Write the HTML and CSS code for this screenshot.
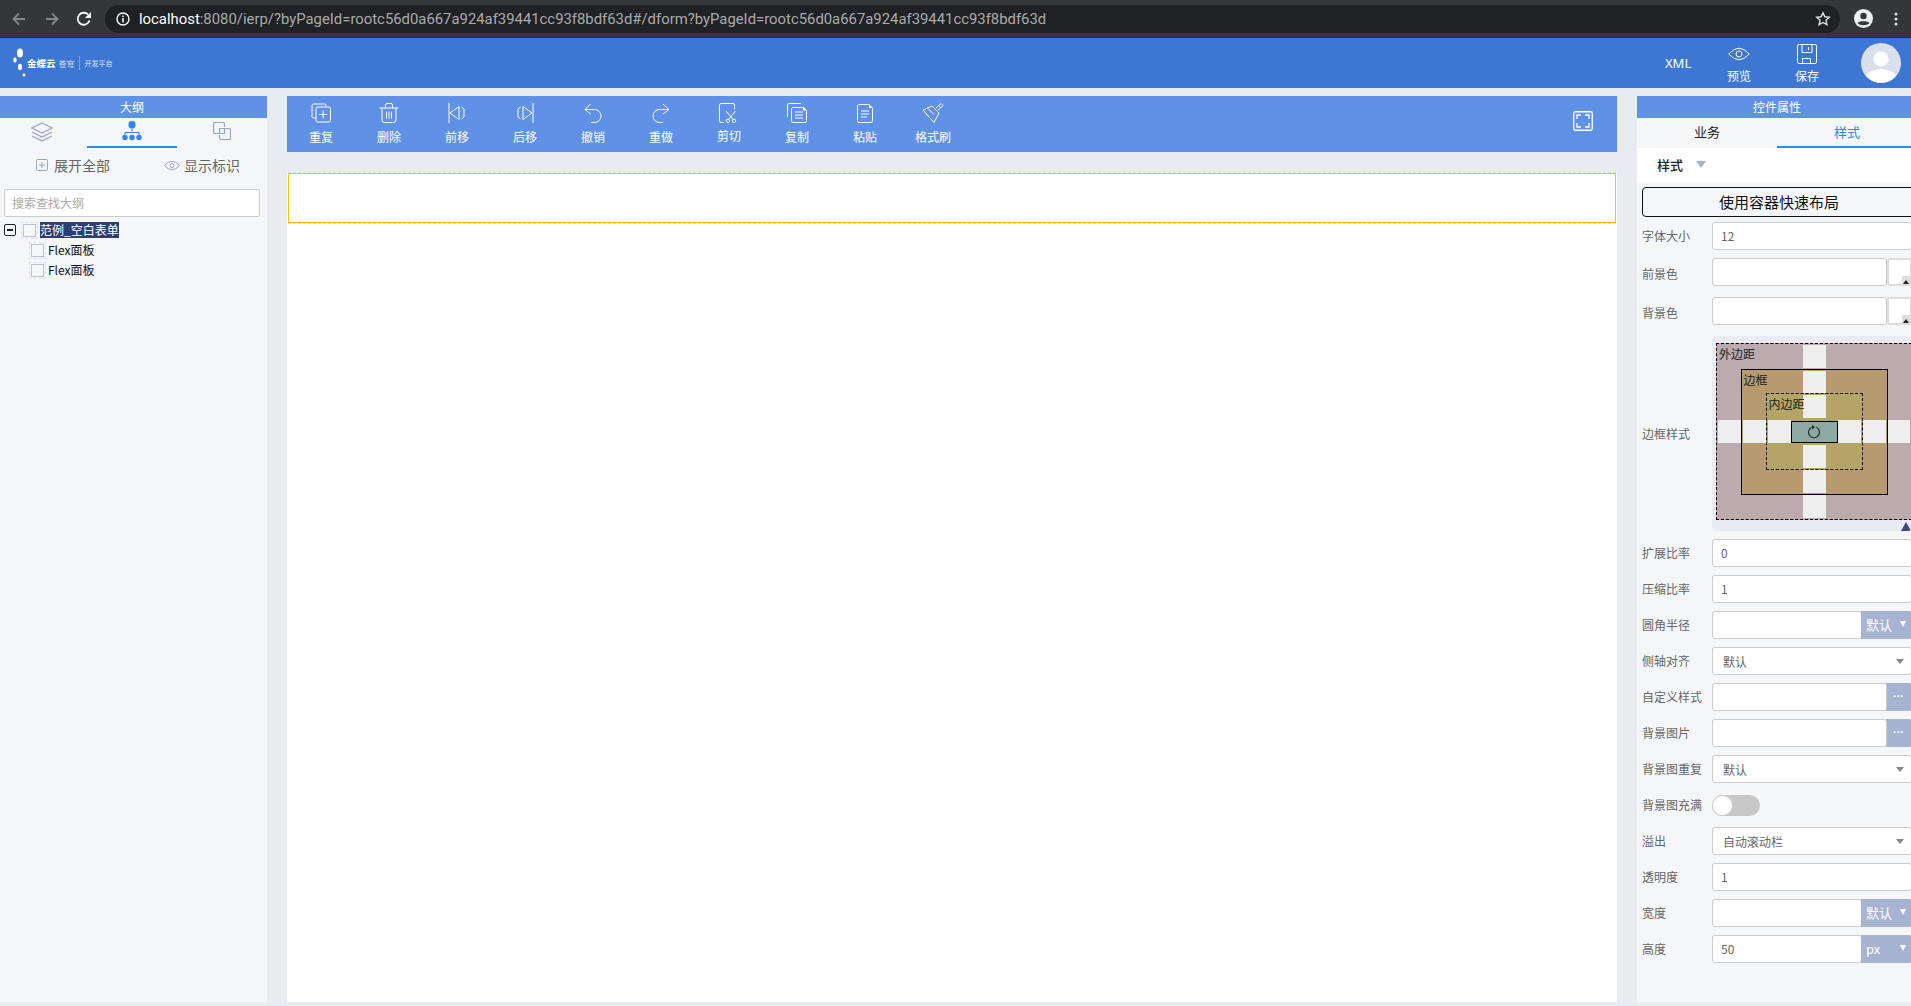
FILE: index.html
```html
<!DOCTYPE html>
<html lang="zh">
<head>
<meta charset="utf-8">
<title>表单设计器</title>
<link rel="stylesheet" href="styles.css">
</head>
<body>
<div class="app">
  <div class="browser">
    <svg class="nav-icon nav-back" width="14" height="14" viewBox="0 0 14 14"><path d="M13 7H2M7 1.500L1.500 7 7 12.500" fill="none" stroke="#85868a" stroke-width="1.800"/></svg>
    <svg class="nav-icon nav-forward" width="14" height="14" viewBox="0 0 14 14"><path d="M1 7h11M7 1.500L12.500 7 7 12.500" fill="none" stroke="#85868a" stroke-width="1.800"/></svg>
    <svg class="nav-icon nav-reload" width="16" height="16" viewBox="0 0 16 16"><path d="M13.500 9.500A6 6 0 1 1 12 3.500" fill="none" stroke="#fff" stroke-width="1.800"/><path d="M15 1v6H9z" fill="#fff"/></svg>
    <div class="url">
      <svg width="14" height="14" viewBox="0 0 14 14"><circle cx="7" cy="7" r="6" fill="none" stroke="#fff" stroke-width="1.400"/><path d="M7 6v4.500M7 3.500v1.500" stroke="#fff" stroke-width="1.500"/></svg>
      <span class="url-text"><span class="url-host">localhost</span>:8080/ierp/?byPageId=rootc56d0a667a924af39441cc93f8bdf63d#/dform?byPageId=rootc56d0a667a924af39441cc93f8bdf63d</span>
      <svg class="star" width="16" height="16" viewBox="0 0 16 16"><path d="M8 1.800l1.900 4 4.400.5-3.300 3 .9 4.400L8 11.500l-3.900 2.200.9-4.400-3.300-3 4.400-.5z" fill="none" stroke="#dfe1e4" stroke-width="1.400"/></svg>
    </div>
    <svg class="profile" width="19" height="19" viewBox="0 0 19 19"><circle cx="9.500" cy="9.500" r="9.500" fill="#eceef0"/><circle cx="9.500" cy="7" r="3.200" fill="#35363a"/><path d="M3.500 14c1.500-2.500 10.500-2.500 12 0-2.500 3-9.500 3-12 0z" fill="#35363a"/></svg>
    <svg class="kebab" width="4" height="14" viewBox="0 0 4 14"><circle cx="2" cy="2" r="1.500" fill="#dfe1e4"/><circle cx="2" cy="7" r="1.500" fill="#dfe1e4"/><circle cx="2" cy="12" r="1.500" fill="#dfe1e4"/></svg>
  </div>

  <header class="topbar">
    <div class="logo">
      <svg width="14" height="30" viewBox="0 0 14 30"><ellipse cx="7" cy="5" rx="3" ry="4.500" fill="#fff"/><ellipse cx="2" cy="12" rx="1.700" ry="2.800" fill="#fff"/><ellipse cx="7" cy="19" rx="2" ry="3.200" fill="#fff"/><circle cx="11" cy="27" r="1.500" fill="#fff"/></svg>
      <span class="logo-main">金蝶云</span>
      <span class="logo-sub">苍穹</span>
      <span class="logo-div"></span>
      <span class="logo-plat">开发平台</span>
    </div>
    <div class="top-actions">
      <div class="top-xml">XML</div>
      <div class="top-btn">
        <svg width="22" height="20" viewBox="0 0 22 20"><path d="M.7 10Q11-1.500 21.300 10 11 21.500.7 10z" fill="none" stroke="#fff"/><circle cx="11" cy="10" r="3" fill="none" stroke="#fff"/></svg>
        <span>预览</span>
      </div>
      <div class="top-btn">
        <svg width="20" height="20" viewBox="0 0 20 20"><path d="M2 .5h16a1.500 1.500 0 0 1 1.500 1.500v16a1.500 1.500 0 0 1-1.500 1.500H2A1.500 1.500 0 0 1 .5 18V2A1.500 1.500 0 0 1 2 .5zM5 .5v8h10v-8M11.500 3v3M5.500 19.500v-5h8v5" fill="none" stroke="#fff"/></svg>
        <span>保存</span>
      </div>
      <svg class="avatar" width="40" height="40" viewBox="0 0 40 40"><circle cx="20" cy="20" r="20" fill="#d9e0ec"/><circle cx="20" cy="16" r="7.500" fill="#fff"/><path d="M5 33c3-9 27-9 30 0a20 20 0 0 1-30 0z" fill="#fff"/></svg>
    </div>
  </header>

  <main class="workspace">
    <aside class="outline">
      <div class="panel-title outline-title">大纲</div>
      <div class="outline-tabs">
        <div class="outline-tab">
          <svg width="22" height="20" viewBox="0 0 22 20"><path d="M11 1l10 5-10 5L1 6zM1 10l10 5 10-5M1 14l10 5 10-5" fill="none" stroke="#97a5c8" stroke-width="1.300"/></svg>
        </div>
        <div class="outline-tab active">
          <svg width="20" height="20" viewBox="0 0 20 20"><rect x="6.500" y="0" width="7" height="7.500" rx="3" fill="#2f87f2"/><path d="M10 7.500v3M3 14v-2.500h14V14" fill="none" stroke="#2f87f2"/><circle cx="3" cy="16.500" r="2.700" fill="#2f87f2"/><circle cx="10" cy="16.500" r="2.700" fill="#2f87f2"/><circle cx="17" cy="16.500" r="2.700" fill="#2f87f2"/></svg>
        </div>
        <div class="outline-tab">
          <svg width="18" height="18" viewBox="0 0 18 18"><path d="M6 11.500H2a1.500 1.500 0 0 1-1.500-1.500V2A1.500 1.500 0 0 1 2 .5h8A1.500 1.500 0 0 1 11.500 2v3M12 6.500h4A1.500 1.500 0 0 1 17.500 8v8a1.500 1.500 0 0 1-1.500 1.500H8A1.500 1.500 0 0 1 6.500 16v-3M6.500 6.500h5v5h-5z" fill="none" stroke="#97a5c8" stroke-width="1.200"/></svg>
        </div>
      </div>
      <div class="outline-actions">
        <div class="outline-action expand">
          <svg width="12" height="12" viewBox="0 0 12 12"><rect x=".5" y=".5" width="11" height="11" rx="1" fill="none" stroke="#97a5c8"/><path d="M3 6h6M6 3v6" stroke="#97a5c8"/></svg>
          <span>展开全部</span>
        </div>
        <div class="outline-action">
          <svg width="16" height="11" viewBox="0 0 16 11"><path d="M.5 5.500Q8-3 15.500 5.500 8 14 .5 5.500z" fill="none" stroke="#97a5c8"/><circle cx="8" cy="5.500" r="2" fill="none" stroke="#97a5c8"/></svg>
          <span>显示标识</span>
        </div>
      </div>
      <div class="outline-search"><span>搜索查找大纲</span></div>
      <div class="tree">
        <div class="tree-row">
          <span class="tree-toggle"></span>
          <span class="tree-check"></span>
          <span class="tree-label selected">范例_空白表单</span>
        </div>
        <div class="tree-row child">
          <span class="tree-check"></span>
          <span class="tree-label">Flex面板</span>
        </div>
        <div class="tree-row child">
          <span class="tree-check"></span>
          <span class="tree-label">Flex面板</span>
        </div>
      </div>
    </aside>

    <section class="center">
      <div class="toolbar">
        <div class="tool">
          <svg width="20" height="20" viewBox="0 0 20 20"><path d="M15 3.500V2.500A1.500 1.500 0 0 0 13.500 1h-11A1.500 1.500 0 0 0 1 2.500v11A1.500 1.500 0 0 0 2.500 15H5" fill="none" stroke="#fff"/><rect x="5" y="4" width="14.500" height="15" rx="1.500" fill="none" stroke="#fff"/><path d="M12.200 7.500v8M8.200 11.500h8" stroke="#fff"/></svg>
          <span>重复</span>
        </div>
        <div class="tool">
          <svg width="20" height="20" viewBox="0 0 20 20"><path d="M.5 5h19M6.500 5V2A1.500 1.500 0 0 1 8 .5h4A1.500 1.500 0 0 1 13.500 2v3M3 5v12a2.500 2.500 0 0 0 2.500 2.500h9A2.500 2.500 0 0 0 17 17V5M7.500 8.500v7M10 8.500v7M12.500 8.500v7" fill="none" stroke="#fff"/></svg>
          <span>删除</span>
        </div>
        <div class="tool">
          <svg width="20" height="20" viewBox="0 0 20 20"><path d="M2 0v20M12 3.500L3 10l9 6.500zM14.500 4l2.500 2v8l-2.500 2" fill="none" stroke="#fff"/></svg>
          <span>前移</span>
        </div>
        <div class="tool">
          <svg width="20" height="20" viewBox="0 0 20 20"><path d="M18 0v20M8 3.500L17 10 8 16.500zM5.500 4L3 6v8l2.500 2" fill="none" stroke="#fff"/></svg>
          <span>后移</span>
        </div>
        <div class="tool">
          <svg width="20" height="20" viewBox="0 0 20 20"><path d="M7.500 1L2 6.500 7.500 11M2 6.500h9.500a6.500 6.500 0 0 1 0 13H8" fill="none" stroke="#fff"/></svg>
          <span>撤销</span>
        </div>
        <div class="tool">
          <svg width="20" height="20" viewBox="0 0 20 20"><path d="M12 1l6 5.500L12 11M18 6.500H8.500a6.500 6.500 0 0 0 0 13H12" fill="none" stroke="#fff"/></svg>
          <span>重做</span>
        </div>
        <div class="tool">
          <svg width="20" height="20" viewBox="0 0 20 20"><path d="M5 19.500H2A1.500 1.500 0 0 1 .5 18V2A1.500 1.500 0 0 1 2 .5h12A1.500 1.500 0 0 1 15.500 2v4M7 8l6.500 8M16.500 8L10 16" fill="none" stroke="#fff"/><circle cx="9" cy="17.800" r="1.700" fill="none" stroke="#fff"/><circle cx="15" cy="17.800" r="1.700" fill="none" stroke="#fff"/></svg>
          <span class="tool-up">剪切</span>
        </div>
        <div class="tool">
          <svg width="20" height="20" viewBox="0 0 20 20"><path d="M14 .5H2A1.500 1.500 0 0 0 .5 2v12" fill="none" stroke="#fff"/><path d="M5 4.500h11.500l3 3V18a1.500 1.500 0 0 1-1.500 1.500H6A1.500 1.500 0 0 1 4.500 18V5M8 9h8M8 12h8M8 15h8" fill="none" stroke="#fff"/><path d="M16 3.500l4 4h-4z" fill="#fff"/></svg>
          <span>复制</span>
        </div>
        <div class="tool">
          <svg width="20" height="20" viewBox="0 0 20 20"><path d="M3.500 1.500h10l4 4V18a1.500 1.500 0 0 1-1.500 1.500H4A1.500 1.500 0 0 1 2.500 18V3a1.500 1.500 0 0 1 1-1.500zM6 8h8M6 11h8M6 14h6" fill="none" stroke="#fff"/><path d="M14 1l4 4h-4z" fill="#fff"/></svg>
          <span>粘贴</span>
        </div>
        <div class="tool">
          <svg width="22" height="20" viewBox="0 0 22 20"><path d="M1 7l9-4 7 7-5 9.500zM6 5.500l6 6M4 11l3 3M14 5l5-4.500 2 2-5 5M17 3l1.500 1.500" fill="none" stroke="#fff"/></svg>
          <span>格式刷</span>
        </div>
        <svg class="fullscreen" width="20" height="20" viewBox="0 0 20 20"><rect x=".75" y=".75" width="18.500" height="18.500" rx="1.500" fill="none" stroke="#fff" stroke-width="1.300"/><path d="M4 8V4h4M12 4h4v4M16 12v4h-4M8 16H4v-4" fill="none" stroke="#fff" stroke-width="1.300"/></svg>
      </div>
      <div class="canvas">
        <div class="zone-wrap"><div class="zone"></div></div>
      </div>
    </section>

    <aside class="props">
      <div class="props-inner">
        <div class="panel-title">控件属性</div>
        <div class="props-tabs">
          <div class="props-tab">业务</div>
          <div class="props-tab active">样式</div>
        </div>
        <div class="props-section">
          <span>样式</span>
          <i class="section-caret"></i>
        </div>
        <div class="props-body">
          <div class="quick-btn">使用容器快速布局</div>
          <div class="form">
            <div class="row"><label>字体大小</label><div class="field">12</div></div>
            <div class="row tall"><label>前景色</label><div class="field"></div><div class="swatch"></div></div>
            <div class="row tall"><label>背景色</label><div class="field"></div><div class="swatch"></div></div>
            <div class="row box-row">
              <label>边框样式</label>
              <div class="box-wrap">
                <div class="bm bm-margin">
                  <span class="bm-name">外边距</span>
                  <i class="strip s-top"></i><i class="strip s-bottom"></i><i class="strip s-left"></i><i class="strip s-right"></i>
                  <div class="bm bm-border">
                    <span class="bm-name">边框</span>
                    <i class="strip s-top"></i><i class="strip s-bottom"></i><i class="strip s-left"></i><i class="strip s-right"></i>
                    <div class="bm bm-padding">
                      <span class="bm-name">内边距</span>
                      <i class="strip s-top"></i><i class="strip s-bottom"></i><i class="strip s-left"></i><i class="strip s-right"></i>
                      <div class="bm-content">
                        <svg width="14" height="14" viewBox="0 0 14 14"><path d="M9.500 2.300A5.500 5.500 0 1 1 4.500 2.300" fill="none" stroke="#1f2d33" stroke-width="1.100"/><path d="M5 0v4.500L8 2z" fill="#1f2d33"/></svg>
                      </div>
                    </div>
                  </div>
                </div>
                <i class="box-corner"></i>
              </div>
            </div>
            <div class="row"><label>扩展比率</label><div class="field">0</div></div>
            <div class="row"><label>压缩比率</label><div class="field">1</div></div>
            <div class="row"><label>圆角半径</label><div class="field"></div><div class="unit">默认<i></i></div></div>
            <div class="row"><label>侧轴对齐</label><div class="field select">默认<i></i></div></div>
            <div class="row"><label>自定义样式</label><div class="field"></div><div class="dots">···</div></div>
            <div class="row"><label>背景图片</label><div class="field"></div><div class="dots">···</div></div>
            <div class="row"><label>背景图重复</label><div class="field select">默认<i></i></div></div>
            <div class="row"><label>背景图充满</label><div class="switch"><i></i></div></div>
            <div class="row"><label>溢出</label><div class="field select">自动滚动栏<i></i></div></div>
            <div class="row"><label>透明度</label><div class="field">1</div></div>
            <div class="row"><label>宽度</label><div class="field"></div><div class="unit">默认<i></i></div></div>
            <div class="row"><label>高度</label><div class="field">50</div><div class="unit">px<i></i></div></div>
          </div>
        </div>
      </div>
    </aside>
  </main>
</div>
</body>
</html>
```

FILE: styles.css
```css
* { box-sizing: border-box; }
html, body { margin: 0; padding: 0; height: 100%; overflow: hidden; }
body {
  font-family: "Noto Sans CJK SC", "Noto Sans", sans-serif;
  font-size: 12px;
  color: #666;
  background: #e8ebf0;
}
.app { display: flex; flex-direction: column; height: 1006px; }

/* browser chrome */
.browser {
  height: 38px;
  flex: none;
  display: flex;
  align-items: center;
  background: #35363a;
  border-bottom: 1px solid #29292c;
  padding-left: 12px;
}
.nav-icon { flex: none; }
.nav-forward { margin-left: 19px; }
.nav-reload { margin-left: 17px; }
.url {
  margin-left: 13px;
  width: 1735px;
  flex: none;
  height: 28px;
  border-radius: 14px;
  background: #202124;
  display: flex;
  align-items: center;
  padding-left: 11px;
  padding-right: 9px;
  font-family: "Roboto", sans-serif;
  font-size: 14.870px;
  color: #a9abae;
}
.url-text { margin-left: 9px; white-space: nowrap; }
.url-host { color: #fff; }
.star { margin-left: auto; }
.profile { margin-left: 14px; flex: none; }
.kebab { margin-left: 21px; flex: none; }

/* header */
.topbar {
  height: 50px;
  flex: none;
  background: #3e77d3;
  display: flex;
  align-items: center;
  justify-content: space-between;
  color: #fff;
}
.logo { display: flex; align-items: center; padding-left: 13px; }
.logo-main { font-size: 9.500px; font-weight: 700; white-space: nowrap; }
.logo-sub { font-size: 8px; margin-left: 3px; color: #dce6f7; white-space: nowrap; }
.logo-div { width: 1px; height: 14px; background: #7ea3e3; margin: 0 5px 0 4px; }
.logo-plat { font-size: 7px; color: #dce6f7; white-space: nowrap; }
.top-actions { display: flex; align-items: center; }
.top-xml { width: 26px; font-size: 13px; font-family: "Noto Sans", sans-serif; margin-right: 14px; white-space: nowrap; }
.top-btn {
  width: 68px;
  height: 50px;
  display: flex;
  flex-direction: column;
  align-items: center;
  padding-top: 6px;
  line-height: 18px;
}
.top-btn span { margin-top: 3px; }
.avatar { margin-left: 20px; margin-right: 10px; }

/* layout */
.workspace {
  flex: 1;
  min-height: 0;
  display: flex;
  padding: 8px 0 4px;
  gap: 20px;
}
.panel-title {
  height: 22px;
  line-height: 22px;
  text-align: center;
  background: #5f92e6;
  color: #fff;
}
.outline-title { padding-right: 3px; }

/* left */
.outline { width: 267px; flex: none; background: #f4f6f8; overflow: hidden; }
.outline-tabs { display: flex; width: 270px; margin-left: -3px; height: 30px; }
.outline-tab {
  width: 90px;
  flex: none;
  display: flex;
  justify-content: center;
  padding-top: 4px;
  border-bottom: 2px solid transparent;
}
.outline-tab.active { padding-top: 3px; border-bottom-color: #2f87f2; }
.outline-actions {
  display: flex;
  align-items: center;
  height: 36px;
  margin-top: -1px;
  font-size: 14px;
  color: #666;
}
.outline-action { display: flex; align-items: center; gap: 4px; }
.outline-action.expand { margin-left: 36px; gap: 6px; margin-right: 54px; }
.outline-search {
  margin: 6px 0 0 4px;
  width: 256px;
  height: 28px;
  background: #fff;
  border: 1px solid #ccc;
  border-radius: 2px;
  padding-left: 7px;
  line-height: 26px;
  color: #aaa;
}
.tree { padding-top: 3px; color: #111; }
.tree-row { display: flex; align-items: center; height: 20px; padding-left: 4px; }
.tree-row.child { padding-left: 31px; }
.tree-toggle {
  width: 12px;
  height: 12px;
  border: 1px solid #222;
  border-radius: 2px;
  margin-right: 7px;
  position: relative;
}
.tree-toggle::after {
  content: "";
  position: absolute;
  left: 2px;
  right: 2px;
  top: 4px;
  height: 2px;
  background: #222;
}
.tree-check {
  width: 13px;
  height: 13px;
  border: 1px solid #b8c2d8;
  margin-right: 4px;
  outline: 1px dashed #e0e3ea;
  outline-offset: 1px;
}
.tree-label { line-height: 16px; }
.tree-label.selected { background: #2d3f70; color: #fff; }

/* center */
.center { width: 1330px; flex: none; display: flex; flex-direction: column; }
.toolbar {
  height: 56px;
  flex: none;
  display: flex;
  align-items: flex-start;
  background: #5f92e6;
  color: #fff;
}
.tool {
  width: 68px;
  display: flex;
  flex-direction: column;
  align-items: center;
  padding-top: 7px;
  line-height: 18px;
}
.tool span { margin-top: 5px; }
.tool span.tool-up { margin-top: 4px; }
.fullscreen { margin: 15px 24px 0 auto; }
.canvas { flex: 1; margin-top: 20px; background: #fff; padding: 0 1px; }
.zone-wrap { border-top: 1px dashed #ddd; border-bottom: 1px dashed #ddd; }
.zone {
  height: 50px;
  background: #fff;
  border: 1px solid #f5c211;
}

/* right */
.props { width: 274px; flex: none; background: #f4f6f8; overflow: hidden; }
.props-inner { width: 280px; }
.props-tabs { display: flex; height: 30px; font-size: 13px; color: #222; }
.props-tab { width: 140px; flex: none; text-align: center; line-height: 28px; border-bottom: 2px solid transparent; }
.props-tab.active { color: #2f87f2; border-bottom-color: #2f87f2; }
.props-section {
  height: 34px;
  background: #fff;
  display: flex;
  align-items: center;
  padding: 0 0 2px 20px;
  font-size: 13px;
  font-weight: 500;
  color: #222;
}
.section-caret {
  margin: 0 0 0 13px;
  width: 0;
  height: 0;
  border-left: 5px solid transparent;
  border-right: 5px solid transparent;
  border-top: 7px solid #a5b2d0;
}
.props-body { padding-left: 5px; padding-top: 5px; }
.quick-btn {
  width: 274px;
  height: 30px;
  border: 1px solid #111;
  border-radius: 4px;
  text-align: center;
  line-height: 28px;
  font-size: 15px;
  color: #111;
}
.form { display: flex; flex-direction: column; gap: 8px; margin-top: 5px; width: 270px; }
.row { display: flex; align-items: flex-start; min-height: 28px; }
.row.tall { height: 31px; }
.row label { width: 70px; flex: none; line-height: 28px; white-space: nowrap; }
.row.tall label { height: 31px; line-height: 32px; }
.field {
  flex: 1;
  min-width: 0;
  height: 28px;
  background: #fff;
  border: 1px solid #ccc;
  border-radius: 3px;
  padding-left: 8px;
  line-height: 26px;
  color: #666;
  position: relative;
}
.select { padding-left: 10px; line-height: 28px; }
.select i {
  position: absolute;
  right: 7px;
  top: 11px;
  border-left: 4px solid transparent;
  border-right: 4px solid transparent;
  border-top: 5px solid #888;
}
.swatch {
  width: 25px;
  height: 28px;
  flex: none;
  background: #fff;
  border: 2px solid #ddd;
  border-radius: 3px;
  position: relative;
}
.swatch::after {
  content: "";
  position: absolute;
  right: 0;
  bottom: -2px;
  width: 8px;
  height: 10px;
  background: #ddd;
}
.swatch::before {
  content: "";
  position: absolute;
  right: 1px;
  bottom: 0;
  border-left: 3px solid transparent;
  border-right: 3px solid transparent;
  border-bottom: 4px solid #222;
  z-index: 1;
}
.unit {
  width: 51px;
  height: 28px;
  flex: none;
  margin-left: -1px;
  background: #a7b4d1;
  border-radius: 0 3px 3px 0;
  color: #fff;
  line-height: 28px;
  padding-left: 5px;
  font-size: 13px;
  position: relative;
}
.unit i {
  position: absolute;
  right: 6px;
  top: 10px;
  border-left: 3.500px solid transparent;
  border-right: 3.500px solid transparent;
  border-top: 6px solid #fff;
}
.dots {
  width: 26px;
  height: 28px;
  flex: none;
  margin-left: -1px;
  padding-right: 1px;
  background: #a7b4d1;
  border-radius: 0 3px 3px 0;
  color: #fff;
  text-align: center;
  line-height: 26px;
  font-family: "Liberation Sans", sans-serif;
  font-size: 11px;
  font-weight: 700;
  white-space: nowrap;
}
.switch {
  width: 48px;
  height: 21px;
  margin-top: 4px;
  background: #c8c8c8;
  border-radius: 11px;
  position: relative;
}
.switch i {
  position: absolute;
  left: 0;
  top: 0;
  width: 21px;
  height: 21px;
  background: #fff;
  border: 1px solid #ccc;
  border-radius: 50%;
}

/* box model widget */
.box-row label { line-height: 28px; margin-top: 84px; }
.box-wrap {
  flex: 1;
  height: 195px;
  background: #ebebf3;
  border-radius: 4px;
  overflow: hidden;
  position: relative;
  padding: 7px 0 0 4px;
}
.bm {
  position: relative;
  display: flex;
  align-items: center;
  justify-content: center;
  flex: none;
  color: #222;
}
.bm-margin { width: 196px; height: 177px; background: #bcaaae; border: 1px dashed #000; }
.bm-border { width: 147px; height: 126px; background: #b89a6f; border: 1px solid #000; }
.bm-padding { width: 97px; height: 77px; background: #b4a566; border: 1px dashed #000; }
.bm-content {
  position: relative;
  width: 47px;
  height: 22px;
  background: #8ca9a3;
  border: 1px solid #000;
  display: flex;
  align-items: center;
  justify-content: center;
}
.bm-name { position: absolute; left: 2px; top: 1px; line-height: 17px; color: #222; z-index: 1; white-space: nowrap; }
.strip { position: absolute; background: #eee; }
.s-top { top: 1px; left: calc(50% - 11.500px); width: 23px; height: 23px; }
.s-bottom { bottom: 1px; left: calc(50% - 11.500px); width: 23px; height: 23px; }
.s-left { left: 1px; top: calc(50% - 11.500px); width: 23px; height: 23px; }
.s-right { right: 1px; top: calc(50% - 11.500px); width: 23px; height: 23px; }
.box-corner {
  position: absolute;
  right: 1px;
  bottom: 0;
  border-left: 5px solid transparent;
  border-right: 5px solid transparent;
  border-bottom: 9px solid #3d4a80;
}
```
